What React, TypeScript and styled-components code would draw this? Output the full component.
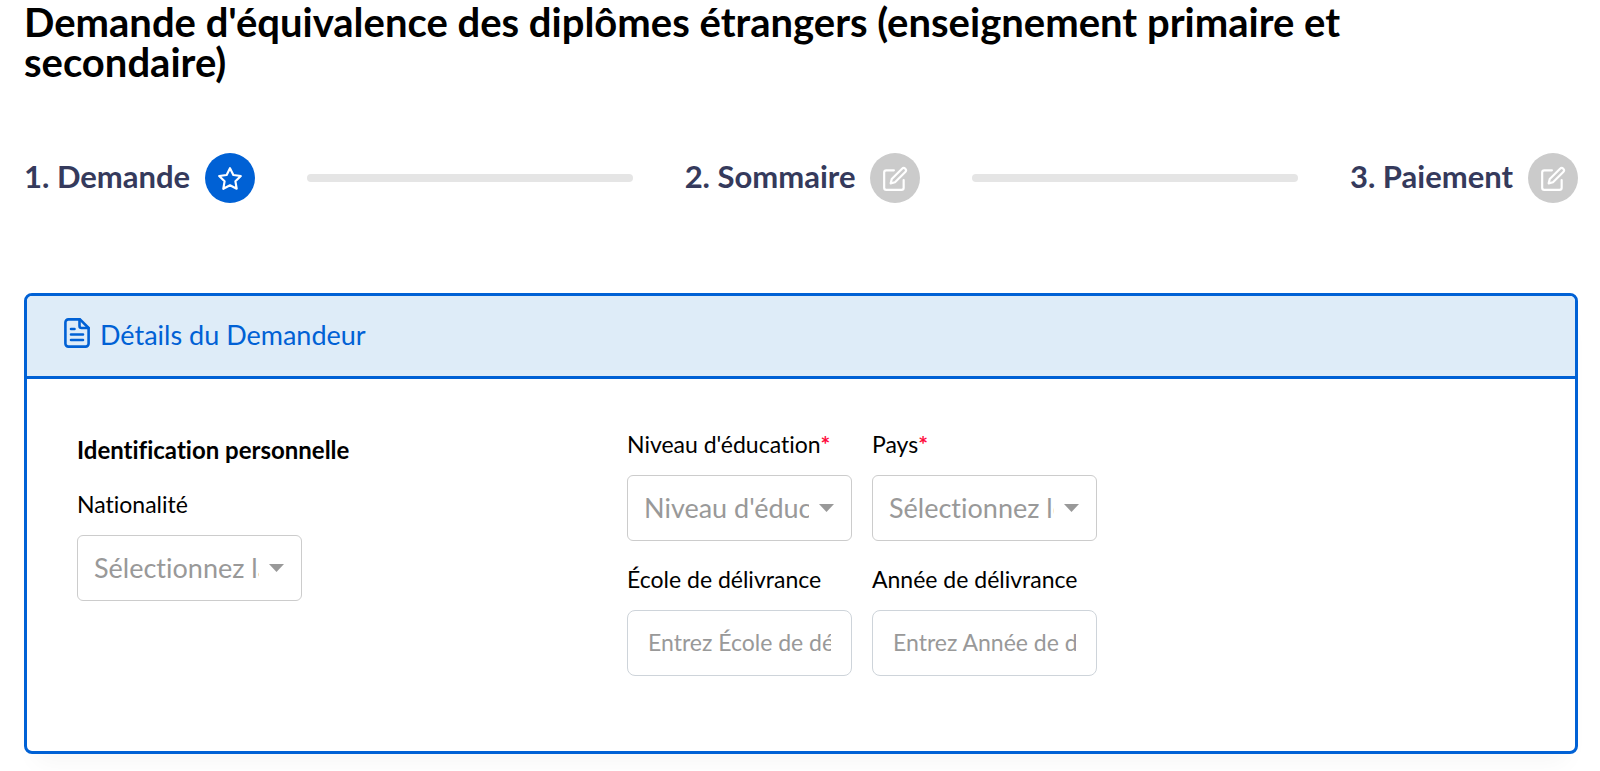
import React, { useId } from 'react';
import styled, { createGlobalStyle } from 'styled-components';
import { FiEdit, FiStar } from 'react-icons/fi';

const GlobalStyle = createGlobalStyle`
  *, *::before, *::after { box-sizing: border-box; }
  body {
    margin: 0;
    background: #fff;
    color: #000;
    font-family: Lato, "Liberation Sans", sans-serif;
    font-variant-ligatures: none;
  }
  h1, h2, h3, ol { margin: 0; padding: 0; }
`;

const BLUE = '#0061d5';

const Page = styled.main`
  padding: 2px 22px 16px 24px;
`;

const Title = styled.h1`
  max-width: 90%;
  font-size: 40px;
  line-height: 40px;
  font-weight: 700;
`;

const Steps = styled.ol`
  display: flex;
  align-items: center;
  gap: 52px;
  margin-top: 71px;
  list-style: none;
`;

const Step = styled.li`
  display: flex;
  align-items: center;
  gap: 15px;
`;

const StepLabel = styled.span`
  padding-bottom: 4px;
  font-size: 31px;
  line-height: 40px;
  font-weight: 700;
  color: #353a5c;
  white-space: nowrap;
`;

const StepBadge = styled.span<{ $active?: boolean }>`
  display: flex;
  align-items: center;
  justify-content: center;
  width: 50px;
  height: 50px;
  padding-top: 2px;
  border-radius: 50%;
  background: ${(p) => (p.$active ? BLUE : '#cbcbcb')};
  color: #fff;
`;

const StepBar = styled.li`
  flex: 1;
  height: 8px;
  border-radius: 4px;
  background: #e5e5e5;
`;

const Card = styled.section`
  margin-top: 90px;
  border: 3px solid ${BLUE};
  border-radius: 8px;
  background: #fff;
  box-shadow: 0 20px 24px -12px rgba(0, 0, 0, 0.04);
`;

const CardHeader = styled.header`
  display: flex;
  align-items: center;
  gap: 10px;
  height: 83px;
  padding: 0 37px 6px;
  border-bottom: 3px solid ${BLUE};
  border-radius: 5px 5px 0 0;
  background: #deecf8;
  color: ${BLUE};
`;

const CardTitle = styled.h2`
  padding-top: 3px;
  font-size: 27px;
  line-height: 36px;
  font-weight: 400;
`;

const CardBody = styled.form`
  display: grid;
  grid-template-columns: 11fr 18fr;
  padding: 51px 48px 75px 50px;
`;

const Column = styled.div`
  display: flex;
  flex-direction: column;
  align-items: flex-start;
  gap: 20px;
`;

const SectionTitle = styled.h3`
  font-size: 24px;
  line-height: 40px;
  font-weight: 700;
`;

const FieldGrid = styled.div`
  display: grid;
  grid-template-columns: repeat(2, 225px);
  justify-content: start;
  align-content: start;
  gap: 24px 20px;
`;

const Field = styled.div`
  display: flex;
  flex-direction: column;
  gap: 17px;
  width: 225px;
`;

const Label = styled.label`
  font-size: 23px;
  line-height: 28px;
  white-space: nowrap;
`;

const Required = styled.span`
  color: #ff0a3c;
  font-weight: 700;
`;

const SelectBox = styled.div`
  position: relative;
  display: flex;
`;

const Select = styled.select`
  appearance: none;
  width: 100%;
  height: 66px;
  padding: 0 42px 2px 16px;
  border: 1px solid #ccc;
  border-radius: 6px;
  background: #fff;
  color: #999;
  font-family: inherit;
  font-variant-ligatures: inherit;
  font-size: 27px;
`;

const Caret = styled.svg`
  position: absolute;
  top: 29px;
  right: 18px;
  pointer-events: none;
`;

const Input = styled.input`
  width: 100%;
  height: 66px;
  padding: 0 20px 2px;
  border: 1px solid #ced4da;
  border-radius: 8px;
  background: #fff;
  color: #000;
  font-family: inherit;
  font-variant-ligatures: inherit;
  font-size: 23px;
  &::placeholder { color: #999; opacity: 1; }
`;

function DocumentIcon() {
  return (
    <svg width="26" height="30" viewBox="0 0 26 30" fill="none" stroke="currentColor" strokeWidth="2.600" strokeLinecap="round" strokeLinejoin="round" aria-hidden="true">
      <path d="M16 1.400H4.400a3 3 0 0 0-3 3v21.200a3 3 0 0 0 3 3h17.200a3 3 0 0 0 3-3V10z" />
      <path d="M15.500 1.400v6.600a2 2 0 0 0 2 2h7M7 11h3.500M7 16.500h12M7 22h12" />
    </svg>
  );
}

type FieldProps = { label: string; placeholder: string; required?: boolean };

function FieldLabel({ id, label, required }: { id: string; label: string; required?: boolean }) {
  return (
    <Label htmlFor={id}>
      {label}
      {required && <Required>*</Required>}
    </Label>
  );
}

function SelectField({ label, placeholder, required }: FieldProps) {
  const id = useId();
  return (
    <Field>
      <FieldLabel id={id} label={label} required={required} />
      <SelectBox>
        <Select id={id} required={required} defaultValue="">
          <option value="">{placeholder}</option>
        </Select>
        <Caret width="15" height="8" viewBox="0 0 15 8" aria-hidden="true">
          <path d="M0 0h15L7.500 8z" fill="#999" />
        </Caret>
      </SelectBox>
    </Field>
  );
}

function TextField({ label, placeholder, required }: FieldProps) {
  const id = useId();
  return (
    <Field>
      <FieldLabel id={id} label={label} required={required} />
      <Input id={id} type="text" placeholder={placeholder} required={required} />
    </Field>
  );
}

export default function App() {
  return (
    <>
      <GlobalStyle />
      <Page>
        <Title>Demande d'équivalence des diplômes étrangers (enseignement primaire et secondaire)</Title>
        <Steps>
          <Step aria-current="step">
            <StepLabel>1. Demande</StepLabel>
            <StepBadge $active><FiStar size={26} /></StepBadge>
          </Step>
          <StepBar aria-hidden="true" />
          <Step>
            <StepLabel>2. Sommaire</StepLabel>
            <StepBadge><FiEdit size={26} /></StepBadge>
          </Step>
          <StepBar aria-hidden="true" />
          <Step>
            <StepLabel>3. Paiement</StepLabel>
            <StepBadge><FiEdit size={26} /></StepBadge>
          </Step>
        </Steps>
        <Card>
          <CardHeader>
            <DocumentIcon />
            <CardTitle>Détails du Demandeur</CardTitle>
          </CardHeader>
          <CardBody>
            <Column>
              <SectionTitle>Identification personnelle</SectionTitle>
              <SelectField label="Nationalité" placeholder="Sélectionnez la nationalité" />
            </Column>
            <FieldGrid>
              <SelectField label="Niveau d'éducation" placeholder="Niveau d'éducation" required />
              <SelectField label="Pays" placeholder="Sélectionnez le pays" required />
              <TextField label="École de délivrance" placeholder="Entrez École de délivrance" />
              <TextField label="Année de délivrance" placeholder="Entrez Année de délivrance" />
            </FieldGrid>
          </CardBody>
        </Card>
      </Page>
    </>
  );
}
